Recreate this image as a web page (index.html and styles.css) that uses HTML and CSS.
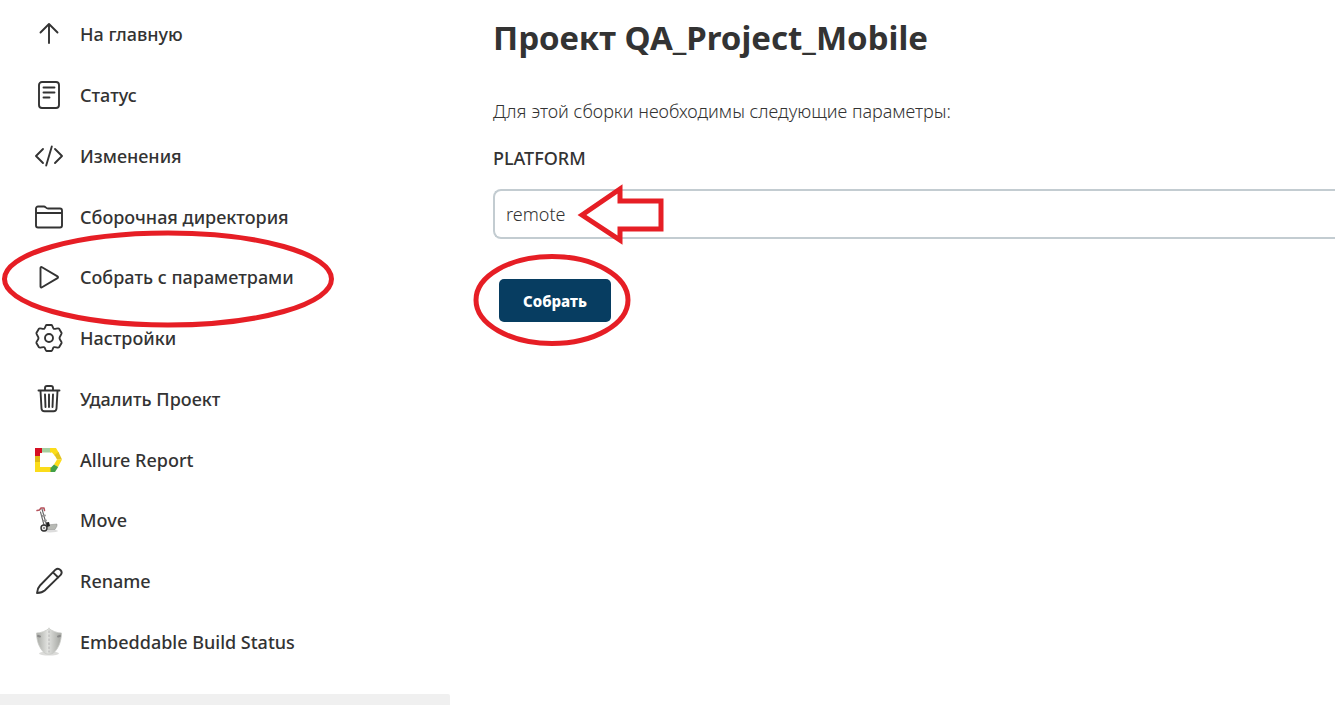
FILE: index.html
```html
<!DOCTYPE html>
<html lang="ru">
<head>
<meta charset="utf-8">
<title>QA_Project_Mobile</title>
<link rel="stylesheet" href="styles.css">
</head>
<body>
<div class="page">
  <aside class="sidebar">
    <nav class="tasks">
      <a class="task" href="#"><svg class="icon" viewBox="0 0 30 30"><path d="M15 24V5M6.500 13.500L15 5l8.500 8.500"/></svg><span>На главную</span></a>
      <a class="task" href="#"><svg class="icon" viewBox="0 0 30 30"><rect x="5" y="2" width="20" height="26" rx="3"/><path d="M9.500 7.500h11M9.500 12.500h11M9.500 17.500h6"/></svg><span>Статус</span></a>
      <a class="task" href="#"><svg class="icon" viewBox="0 0 30 30"><path d="M9 8l-7 7 7 7M21 8l7 7-7 7M17.800 5.500l-5.600 19"/></svg><span>Изменения</span></a>
      <a class="task" href="#"><svg class="icon" viewBox="0 0 30 30"><path d="M2 12V6.500a2 2 0 0 1 2-2h6c1.500 0 2 2 4 2h12a2 2 0 0 1 2 2v15a2 2 0 0 1-2 2H4a2 2 0 0 1-2-2V11h26"/></svg><span>Сборочная директория</span></a>
      <a class="task" href="#"><svg class="icon" viewBox="0 0 30 30"><path d="M6.500 6v18.500c0 .8.800 1.300 1.500.8l15.500-9.200c.7-.4.700-1.300 0-1.700L8 5.200c-.7-.4-1.500 0-1.500.8z"/></svg><span>Собрать с параметрами</span>
        <svg class="mark mark-task" viewBox="0 0 332 96"><ellipse cx="166" cy="48" rx="163.500" ry="46"/></svg></a>
      <a class="task" href="#"><svg class="icon" viewBox="0 0 30 30"><path d="M12.500 2h5c1 0 1.200 3 2.200 3.700 1.200.8 4.600-1.200 5.400 0l2.500 4.300c.5 1-2.100 3.200-2.100 5s2.600 4 2.100 5l-2.500 4.300c-.8 1.200-4.200-.8-5.400 0-1 .7-1.200 3.700-2.200 3.700h-5c-1 0-1.200-3-2.200-3.700-1.200-.8-4.600 1.200-5.400 0L2.400 20c-.5-1 2.100-3.200 2.100-5s-2.600-4-2.100-5l2.500-4.300c.8-1.200 4.200.8 5.400 0C11.300 5 11.500 2 12.500 2z"/><circle cx="15" cy="15" r="4"/></svg><span>Настройки</span></a>
      <a class="task" href="#"><svg class="icon" viewBox="0 0 30 30"><path d="M4.500 6.500h21M11 6V4a2 2 0 0 1 2-2h4a2 2 0 0 1 2 2v2M6.500 7l1 17.500a3 3 0 0 0 3 2.800h9a3 3 0 0 0 3-2.800l1-17.500M11 10.500l.5 12.500M15 10.500V23M19 10.500l-.5 12.500"/></svg><span>Удалить Проект</span></a>
      <a class="task" href="#"><svg class="icon solid" viewBox="0 0 30 30"><path fill="#fbdc1a" d="M1 10h5v12h11v5H1z"/><path fill="#dfb913" d="M1 11h5v6H1z"/><path fill="#d50f23" d="M1 3h7v5H6v3H1z"/><path fill="#a5cf9f" d="M8 3h9v4.500H8z"/><path fill="#fbdc1a" d="M16 3h6l3 5-4 3-3-3.500h-2z"/><path fill="#e3c41d" d="M24.500 7l3.500 7.500h-5L20.500 10z"/><path fill="#fbdc1a" d="M23 14.500h5L24 22l-4-2.500z"/><path fill="#42a047" d="M20 19.500l4.200 2.500-3.200 5h-4.500v-4z"/></svg><span>Allure Report</span></a>
      <a class="task" href="#"><svg class="icon solid" viewBox="0 0 30 30"><ellipse cx="16" cy="26" rx="8" ry="1.500" fill="#ddd"/><path d="M8 4l4.500 16M6.500 7l3.500 13" fill="none" stroke="#666" stroke-width="1.100"/><path d="M8.500 11l2.500-.5M9.500 16l2.500-.5" stroke="#999"/><path d="M3 5.500l2.500-.5L7 3h3l.5 2.500" fill="none" stroke="#b5525c" stroke-width="1.500"/><path fill="#b8bab5" stroke="#8a8b88" stroke-width=".5" d="M13 20l10-1v2l-2 3.500h-8z"/><path fill="#222" d="M12 17.500l3-.5 1 4-3 1z"/><circle cx="10" cy="23" r="3" fill="#eee" stroke="#333" stroke-width="1.400"/><circle cx="10" cy="23" r="1" fill="#777"/></svg><span>Move</span></a>
      <a class="task" href="#"><svg class="icon" viewBox="0 0 30 30"><path d="M3 27c.3-3.500 1.500-6 3-7.500L21.500 3.700a3.700 3.700 0 0 1 5.200 5.200L10.700 24.500c-2 1.800-4.500 2.300-7.700 2.500zM19 6.300l5.200 5.200"/></svg><span>Rename</span></a>
      <a class="task" href="#"><svg class="icon solid" viewBox="0 0 30 30"><defs><linearGradient id="steel"><stop offset="0" stop-color="#a8aaa5"/><stop offset=".45" stop-color="#e2e3e0"/><stop offset="1" stop-color="#a2a49f"/></linearGradient></defs><ellipse cx="15" cy="26.500" rx="10" ry="2" fill="#dcdcda"/><path fill="url(#steel)" stroke="#c9cac7" stroke-width=".8" d="M15 1.500c3 2.500 8 4.500 12.500 4.500-.2 8-2.500 15-8 20-3 1.600-6 1.600-9 0C5 21 2.700 14 2.500 6 7 6 12 4 15 1.500z"/><path d="M15 4v21" fill="none" stroke="#b4b4b4" stroke-width="1" stroke-dasharray="1.500 2.500"/><path d="M4 9l2 .5M26 9l-2 .5" stroke="#888"/></svg><span>Embeddable Build Status</span></a>
    </nav>
    <div class="builds"></div>
  </aside>
  <main class="main">
    <h1 class="title">Проект QA_Project_Mobile</h1>
    <p class="intro">Для этой сборки необходимы следующие параметры:</p>
    <form class="form">
      <label class="label" for="platform">PLATFORM</label>
      <div class="field">
        <input class="input" id="platform" type="text" value="remote">
        <svg class="mark mark-field" viewBox="0 0 90 60"><path d="M5 30L43 4v12h41v28H43v11z"/></svg>
      </div>
      <div class="actions">
        <button class="build" type="button">Собрать</button>
        <svg class="mark mark-build" viewBox="0 0 158 92"><ellipse cx="79" cy="46" rx="76" ry="43.500"/></svg>
      </div>
    </form>
  </main>
</div>
</body>
</html>
```
FILE: styles.css
```css
* { box-sizing: border-box; }
body {
  margin: 0;
  background: #fff;
  color: #333;
  font-family: "Noto Sans", "Open Sans", sans-serif;
  font-size: 18px;
  line-height: 24px;
}
.page { display: flex; height: 100vh; overflow: hidden; }
.sidebar {
  display: flex;
  flex: 0 0 450px;
  flex-direction: column;
  padding-top: 4px;
}
.tasks { display: flex; flex: 1; flex-direction: column; margin-bottom: 22px; }
.task {
  position: relative;
  display: flex;
  flex: 1;
  align-items: center;
  gap: 16px;
  padding-left: 34px;
  color: inherit;
  font-weight: 500;
  text-decoration: none;
}
.icon {
  width: 30px;
  height: 30px;
  fill: none;
  stroke: #333;
  stroke-width: 1.9;
  stroke-linecap: round;
  stroke-linejoin: round;
}
.solid { stroke: none; }
.builds { height: 11px; background: #f0f0f0; border-top-right-radius: 2px; }
.main { flex: 1; min-width: 0; padding: 14px 0 0 43px; }
.title { margin: 0 0 37px; font-size: 33px; font-weight: 700; line-height: 48px; }
.intro { margin: 0 0 23px; font-weight: 300; }
.label { display: block; margin-bottom: 19px; font-weight: 500; }
.field { position: relative; }
.input {
  display: block;
  width: 100%;
  height: 50px;
  padding: 0 11px;
  border: 2px solid #c3ccd1;
  border-right: 0;
  border-radius: 8px 0 0 8px;
  background: #fff;
  color: #333;
  font: inherit;
  font-weight: 300;
}
.actions { position: relative; padding: 40px 0 0 6px; }
.build {
  width: 112px;
  height: 43px;
  padding: 0;
  border: 0;
  border-radius: 5px;
  background: #073d61;
  color: #fff;
  font: inherit;
  font-size: 15px;
  font-weight: 800;
}
.mark {
  position: absolute;
  overflow: visible;
  fill: none;
  stroke: #e61e25;
  stroke-width: 5;
  pointer-events: none;
}
.mark-task { left: 2px; top: -16px; width: 332px; height: 96px; z-index: 1; }
.mark-field { left: 84px; top: -4px; width: 90px; height: 60px; }
.mark-build { left: -20px; top: 15px; width: 158px; height: 92px; }
```
